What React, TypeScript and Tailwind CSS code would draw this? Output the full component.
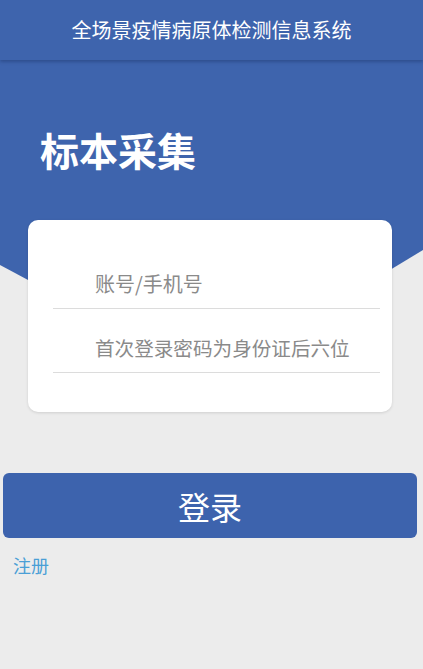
export default function App() {
  return (
    <div className="relative min-h-[669px] w-full overflow-hidden bg-[#ececec] font-['Noto_Sans_CJK_SC','Noto_Sans',sans-serif]">
      {/* blue chevron backdrop */}
      <div className="absolute inset-x-0 top-0 h-[400px] bg-[#3e64ad] [clip-path:polygon(0_0,100%_0,100%_250px,50%_378px,0_265px)]" />

      <div className="relative">
        <header className="flex h-[60px] items-center justify-center bg-[#3e64ad] text-[20px] leading-none text-white shadow-[0_2px_3px_rgba(20,40,90,0.35)]">
          全场景疫情病原体检测信息系统
        </header>

        <h1 className="ml-[40px] mt-[70px] text-[39px] font-bold leading-none text-white">标本采集</h1>

        <div className="ml-[28px] mt-[51px] w-[364px] rounded-[10px] bg-white pb-[39px] pt-[25px] shadow-[0_1px_3px_rgba(0,0,0,0.12)]">
          <div className="ml-[25px] mr-[12px] flex h-[64px] items-center border-b border-[#dcdcdc] pl-[42px] pt-[14px] text-[20px] leading-none text-[#8a8a8a]">
            账号/手机号
          </div>
          <div className="ml-[25px] mr-[12px] flex h-[64px] items-center border-b border-[#dcdcdc] pl-[42px] pt-[14px] text-[19.6px] leading-none text-[#8a8a8a]">
            首次登录密码为身份证后六位
          </div>
        </div>

        <button className="mx-[3px] mt-[61px] flex h-[65px] w-[414px] items-center justify-center rounded-[6px] bg-[#3d63ad] text-[32px] leading-none text-white">
          登录
        </button>

        <div className="ml-[13px] mt-[18px] text-[18px] leading-none text-[#4a9fd6]">注册</div>
      </div>
    </div>
  );
}
